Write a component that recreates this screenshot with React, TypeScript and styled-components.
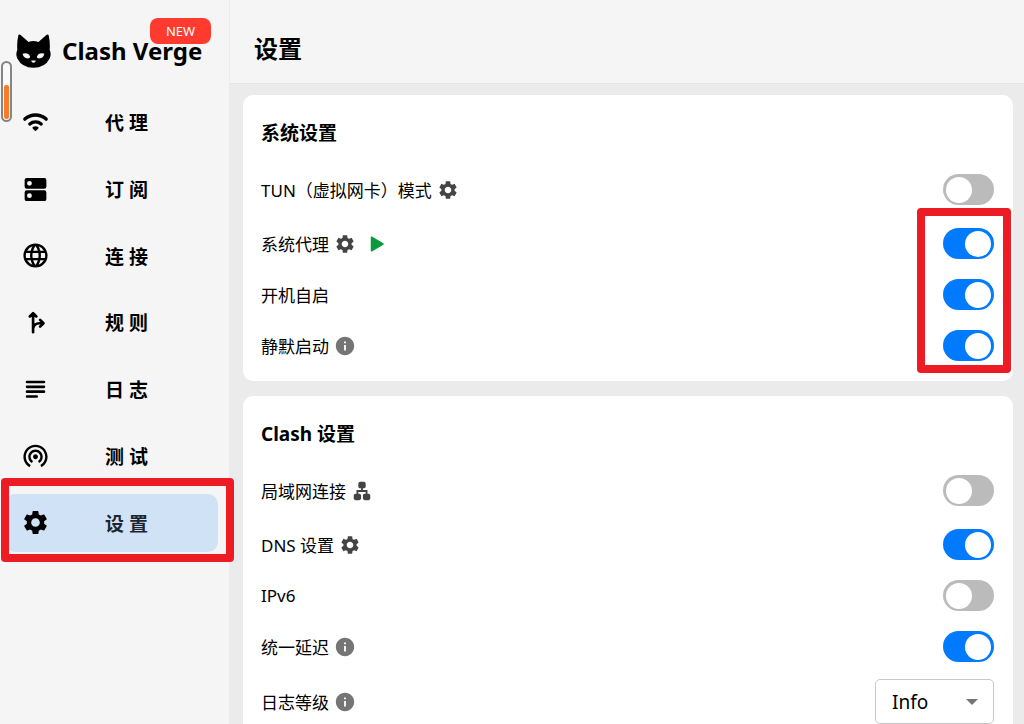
import React from 'react';
import styled, { createGlobalStyle, css } from 'styled-components';
import { MdInfo, MdLanguage, MdSettings, MdWifiTethering } from 'react-icons/md';

const GlobalStyle = createGlobalStyle`
  * { box-sizing: border-box; }
  body {
    margin: 0;
    background: #ebebeb;
    color: #000;
    font-family: 'Noto Sans', 'Noto Sans CJK SC', sans-serif;
    font-size: 17px;
  }
  button, select { font-family: inherit; color: inherit; }
`;

const Shell = styled.div`
  display: flex;
  height: 100vh;
  overflow: hidden;
`;

const Sidebar = styled.aside`
  position: relative;
  flex: 0 0 230px;
  background: #f5f5f5;
  border-right: 1px solid #ececec;
`;

const Brand = styled.div`
  display: flex;
  align-items: center;
  gap: 11px;
  height: 89px;
  padding: 12px 0 0 16px;
`;

const BrandName = styled.span`
  font-size: 24px;
  line-height: 32px;
  font-weight: 700;
  white-space: nowrap;
`;

const NewBadge = styled.button`
  position: absolute;
  top: 18px;
  right: 18px;
  width: 61px;
  height: 26px;
  padding: 0;
  border: 0;
  border-radius: 8px;
  background: #ff3b30;
  color: #fff;
  font-size: 13px;
`;

const MemoryGauge = styled.div`
  position: absolute;
  top: 61px;
  left: 1px;
  display: flex;
  align-items: flex-end;
  width: 11px;
  height: 61px;
  padding: 1px;
  border: 2px solid #858585;
  border-radius: 6px;
  background: #fafafa;
`;

const GaugeLevel = styled.div`
  width: 100%;
  height: 34px;
  border-radius: 2px;
  background: #ff7a26;
`;

const Nav = styled.nav`
  display: grid;
  grid-auto-rows: 1fr;
  align-items: center;
  height: 467px;
  padding: 0 11px 0 5px;
`;

const NavSlot = styled.div`
  position: relative;
`;

const NavItem = styled.button<{ $active?: boolean }>`
  display: flex;
  align-items: center;
  width: 100%;
  height: 58px;
  padding: 0 0 0 16px;
  border: 0;
  border-radius: 10px;
  background: ${(p) => (p.$active ? '#d0e2f6' : 'transparent')};
  color: ${(p) => (p.$active ? '#1c2632' : '#000')};
  font-size: 19px;
  font-weight: 700;
  text-align: left;
  svg { color: #000; }
`;

const NavLabel = styled.span`
  margin-left: 55px;
`;

const highlight = css`
  position: absolute;
  border: 8px solid #ed1c24;
  border-radius: 4px;
  pointer-events: none;
`;

const NavHighlight = styled.div`
  ${highlight}
  top: -16px;
  bottom: -10px;
  left: -4px;
  right: -16px;
  z-index: 2;
`;

const SwitchHighlight = styled.div`
  ${highlight}
  top: -10px;
  bottom: -2px;
  right: -17px;
  width: 94px;
`;

const Main = styled.main`
  flex: 1;
  min-width: 0;
  display: flex;
  flex-direction: column;
`;

const Header = styled.header`
  flex: none;
  display: flex;
  align-items: center;
  height: 84px;
  padding: 14px 24px 0;
  background: #f5f5f5;
  border-bottom: 1px solid #e5e5e5;
`;

const PageTitle = styled.h1`
  margin: 0;
  font-size: 24px;
  line-height: 36px;
`;

const Content = styled.div`
  flex: 1;
  display: flex;
  flex-direction: column;
  gap: 15px;
  padding: 11px 11px 15px 13px;
  overflow-y: auto;
  scrollbar-width: none;
`;

const Card = styled.section`
  flex: none;
  padding: 22px 19px 10px 18px;
  border-radius: 10px;
  background: #fff;
`;

const CardTitle = styled.h2`
  margin: 0 0 12px;
  font-size: 19px;
  line-height: 32px;
`;

const RowGroup = styled.div`
  position: relative;
`;

const rowHeights = { normal: 51, tall: 57, field: 59 };

const Row = styled.div<{ $size: keyof typeof rowHeights }>`
  display: flex;
  align-items: center;
  justify-content: space-between;
  height: ${(p) => rowHeights[p.$size]}px;
`;

const RowText = styled.div`
  display: flex;
  align-items: center;
  gap: 5px;
`;

const IconButton = styled.button<{ $tone?: string }>`
  display: flex;
  padding: 0;
  border: 0;
  background: none;
  color: ${(p) => p.$tone ?? '#444'};
`;

const Switch = styled.input`
  appearance: none;
  display: flex;
  align-items: center;
  width: 51px;
  height: 31px;
  margin: 0;
  padding: 0 3px;
  border-radius: 16px;
  background: #bbb;
  &::before {
    content: '';
    width: 26px;
    height: 26px;
    border-radius: 50%;
    background: #fff;
  }
  &:checked {
    justify-content: flex-end;
    background: #007aff;
  }
`;

const SelectBox = styled.div`
  position: relative;
  width: 119px;
  svg {
    position: absolute;
    top: 20px;
    right: 16px;
    pointer-events: none;
  }
`;

const Select = styled.select`
  appearance: none;
  width: 100%;
  height: 45px;
  padding: 0 16px;
  border: 1px solid #c8c8c8;
  border-radius: 5px;
  background: #fff;
  font-size: 19px;
`;

const CatLogo = () => (
  <svg width="35" height="34" viewBox="0 0 106 103" aria-hidden="true">
    <path d="M7 4Q9 0 14 3L38 24Q53 18 68 24L92 3Q97 0 99 4Q104 28 102 48Q108 62 102 74Q88 102 53 102Q18 102 4 74Q-2 62 4 48Q2 28 7 4Z" />
    <path fill="#f5f5f5" d="M20 60Q37 55 43 69Q43 74 36 74Q23 74 20 60ZM86 60Q69 55 63 69Q63 74 70 74Q83 74 86 60ZM46 80H60Q59 87 53 87Q47 87 46 80Z" />
  </svg>
);

type IconProps = { size: number };

const WifiIcon = ({ size }: IconProps) => (
  <svg width={size} height={size} viewBox="0 0 24 24" fill="none" stroke="currentColor" strokeWidth="2.8" strokeLinecap="round" strokeLinejoin="round">
    <path d="M3.2 9.2C8.2 4.6 15.8 4.6 20.8 9.2M7.3 13.2C10 10.9 14 10.9 16.7 13.2" />
    <path d="M12 17.9L10.5 16.4Q12 15.8 13.5 16.4Z" fill="currentColor" strokeWidth="2" />
  </svg>
);

const DnsIcon = ({ size }: IconProps) => (
  <svg width={size} height={size} viewBox="0 0 24 24" fill="currentColor">
    <path fillRule="evenodd" d="M4.8 2.4H19.2Q21 2.4 21 4.2V9.6Q21 11.4 19.2 11.4H4.8Q3 11.4 3 9.6V4.2Q3 2.4 4.8 2.4ZM7 4.9A2 2 0 1 0 7 8.9A2 2 0 1 0 7 4.9ZM4.8 12.6H19.2Q21 12.6 21 14.4V19.8Q21 21.6 19.2 21.6H4.8Q3 21.6 3 19.8V14.4Q3 12.6 4.8 12.6ZM7 15.1A2 2 0 1 0 7 19.1A2 2 0 1 0 7 15.1Z" />
  </svg>
);

const ForkIcon = ({ size }: IconProps) => (
  <svg width={size} height={size} viewBox="0 0 24 24" fill="none" stroke="currentColor" strokeWidth="2.2" strokeLinecap="round" strokeLinejoin="round">
    <path d="M10 20V4.6M7.3 7L10 4.3L12.7 7M10 16.8C10.6 14 12.6 12.6 15.4 12.6H18.4M15.8 9.8L18.6 12.6L15.8 15.4" />
  </svg>
);

const SubjectIcon = ({ size }: IconProps) => (
  <svg width={size} height={size} viewBox="0 0 24 24" fill="none" stroke="currentColor" strokeWidth="2.2" strokeLinecap="round">
    <path d="M5 5.8H19M5 9.8H19M5 13.8H19M5 17.8H13" />
  </svg>
);

const LanIcon = ({ size }: IconProps) => (
  <svg width={size} height={size} viewBox="0 0 24 24" fill="currentColor">
    <rect x="8" y="2" width="8" height="7" rx="2" />
    <rect x="3" y="15" width="8" height="7" rx="2" />
    <rect x="13" y="15" width="8" height="7" rx="2" />
    <path d="M12 8V12M7 16V12H17V16" fill="none" stroke="currentColor" strokeWidth="2" />
  </svg>
);

const PlayIcon = ({ size }: IconProps) => (
  <svg width={size} height={size} viewBox="0 0 24 24" fill="currentColor" stroke="currentColor" strokeWidth="1.4" strokeLinejoin="round">
    <path d="M9.7 5.7V18.3L20.3 12Z" />
  </svg>
);

const navItems: { label: string; Icon: React.ComponentType<IconProps>; active?: boolean }[] = [
  { label: '代 理', Icon: WifiIcon },
  { label: '订 阅', Icon: DnsIcon },
  { label: '连 接', Icon: MdLanguage },
  { label: '规 则', Icon: ForkIcon },
  { label: '日 志', Icon: SubjectIcon },
  { label: '测 试', Icon: MdWifiTethering },
  { label: '设 置', Icon: MdSettings, active: true },
];

type SettingProps = {
  id: string;
  label: string;
  on?: boolean;
  size?: keyof typeof rowHeights;
  children?: React.ReactNode;
};

const Gear = ({ label }: { label: string }) => (
  <IconButton type="button" aria-label={label}><MdSettings size={22} /></IconButton>
);

const Info = ({ label }: { label: string }) => (
  <IconButton type="button" aria-label={label} $tone="#757575"><MdInfo size={22} /></IconButton>
);

const Setting = ({ id, label, on, size = 'normal', children }: SettingProps) => (
  <Row $size={size}>
    <RowText>
      <label htmlFor={id}>{label}</label>
      {children}
    </RowText>
    <Switch type="checkbox" id={id} defaultChecked={on} />
  </Row>
);

export default function App() {
  return (
    <Shell>
      <GlobalStyle />
      <Sidebar>
        <Brand>
          <CatLogo />
          <BrandName>Clash Verge</BrandName>
        </Brand>
        <NewBadge type="button">NEW</NewBadge>
        <MemoryGauge><GaugeLevel /></MemoryGauge>
        <Nav>
          {navItems.map(({ label, Icon, active }) => (
            <NavSlot key={label}>
              <NavItem type="button" $active={active}>
                <Icon size={29} />
                <NavLabel>{label}</NavLabel>
              </NavItem>
              {active && <NavHighlight />}
            </NavSlot>
          ))}
        </Nav>
      </Sidebar>
      <Main>
        <Header><PageTitle>设置</PageTitle></Header>
        <Content>
          <Card>
            <CardTitle>系统设置</CardTitle>
            <Setting id="tun" label="TUN（虚拟网卡）模式" size="tall"><Gear label="TUN" /></Setting>
            <RowGroup>
              <Setting id="proxy" label="系统代理" on>
                <Gear label="系统代理" />
                <IconButton type="button" aria-label="启动" $tone="#0a9a3c"><PlayIcon size={26} /></IconButton>
              </Setting>
              <Setting id="autostart" label="开机自启" on />
              <Setting id="silent" label="静默启动" on><Info label="静默启动" /></Setting>
              <SwitchHighlight />
            </RowGroup>
          </Card>
          <Card>
            <CardTitle>Clash 设置</CardTitle>
            <Setting id="lan" label="局域网连接" size="tall">
              <IconButton type="button" aria-label="局域网连接"><LanIcon size={22} /></IconButton>
            </Setting>
            <Setting id="dns" label="DNS 设置" on><Gear label="DNS" /></Setting>
            <Setting id="ipv6" label="IPv6" />
            <Setting id="delay" label="统一延迟" on><Info label="统一延迟" /></Setting>
            <Row $size="field">
              <RowText>
                <label htmlFor="level">日志等级</label>
                <Info label="日志等级" />
              </RowText>
              <SelectBox>
                <Select id="level" defaultValue="Info">
                  <option>Debug</option>
                  <option>Info</option>
                  <option>Warn</option>
                  <option>Error</option>
                </Select>
                <svg width="12" height="6" viewBox="0 0 12 6"><path fill="#757575" d="M0 0H12L6 6Z" /></svg>
              </SelectBox>
            </Row>
          </Card>
        </Content>
      </Main>
    </Shell>
  );
}
